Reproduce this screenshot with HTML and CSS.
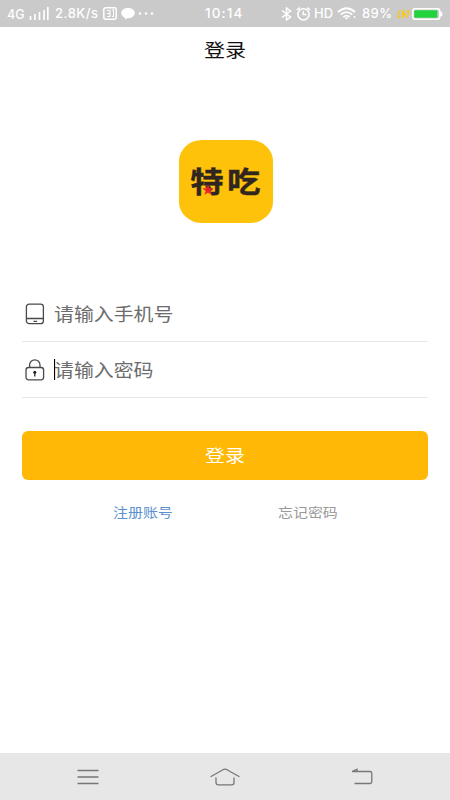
FILE: index.html
```html
<!DOCTYPE html>
<html lang="zh-CN">
<head>
<meta charset="utf-8">
<title>登录</title>
<link rel="stylesheet" href="styles.css">
</head>
<body>
<div class="screen">
  <header class="status">
    <div class="status-left">
      <span class="network">4G</span>
      <svg class="signal" width="20" height="13" viewBox="0 0 20 13"><path d="M1.500 9v4M6 7v6M10.500 5v8M15 3v10M18.800 0v13" stroke="#fff" stroke-width="1.700"/></svg>
      <span class="speed">2.8K/s</span>
      <svg class="app" width="14" height="13" viewBox="0 0 14 13" fill="none" stroke="#fff"><rect x=".8" y=".8" width="12.400" height="11.400" rx="2" stroke-width="1.500"/><path d="M4 3.500h3v6H4M4 6.500h3M9 3h1.500v6.500H9" stroke-width="1.100"/></svg>
      <svg class="bubble" width="14" height="13" viewBox="0 0 14 13" fill="#fff"><ellipse cx="7" cy="6" rx="6.800" ry="5.200"/><path d="M3.500 9.500l1 3L8 10z"/></svg>
      <svg class="dots" width="16" height="3" viewBox="0 0 16 3" fill="#fff"><circle cx="2" cy="1.500" r="1.200"/><circle cx="8" cy="1.500" r="1.200"/><circle cx="14" cy="1.500" r="1.200"/></svg>
    </div>
    <span class="clock">10:14</span>
    <div class="status-right">
      <svg class="bluetooth" width="11" height="14" viewBox="0 0 11 14" fill="none" stroke="#fff" stroke-width="1.500"><path d="M1 3.500l8.500 6.500-4 3V1l4 3L1 10.500"/></svg>
      <svg class="alarm" width="15" height="14" viewBox="0 0 15 14" fill="none" stroke="#fff" stroke-width="1.500"><circle cx="7.500" cy="7.300" r="5.600"/><path d="M7.300 4.300v3.200h3M.8 3L4 .7M14.200 3L11 .7"/></svg>
      <span class="hd">HD</span>
      <svg class="wifi" width="20" height="13" viewBox="0 0 20 13" fill="none" stroke="#fff" stroke-width="1.700"><path d="M1 5Q9.500-2.500 18 5M3.700 7.500Q9.500 2.700 15.300 7.500M6.300 10Q9.500 7.500 12.700 10"/><path d="M7.500 10.500h4l-2 2.300z" fill="#fff" stroke="none"/><circle cx="17.500" cy="10" r=".9" fill="#fff" stroke="none"/></svg>
      <span class="percent">89%</span>
      <svg class="bolt" width="13" height="12" viewBox="0 0 13 12"><path d="M8 .5L3.500 6.500h2.300L4.500 11.500l5.500-6H7.300z" fill="#f8c812"/><path d="M4 2Q.2 4 1.500 9.500l2-1M9.500 3.500l2-1q1 4.500-2.500 7" fill="none" stroke="#f8c812" stroke-width="1.200"/></svg>
      <svg class="battery" width="31" height="12" viewBox="0 0 31 12"><rect x=".8" y=".8" width="27" height="10.400" rx="2.500" fill="none" stroke="#fff" stroke-width="1.500"/><rect x="2.300" y="2.200" width="23" height="7.600" rx="1" fill="#20d33d"/><path d="M28 3.500q2.500 0 2.500 2.500T28 8.500z" fill="#fff"/></svg>
    </div>
  </header>

  <h1 class="title"><span class="wide-title">登录</span></h1>

  <main class="content">
    <div class="logo">
      <span class="logo-text">特吃</span>
      <svg class="star" width="12" height="12" viewBox="0 0 12 12"><path d="M6 .3l1.400 3.900 4.200.1-3.300 2.600 1.200 4L6 8.600l-3.500 2.300 1.200-4L.4 4.300l4.200-.1z" fill="#ed2228"/></svg>
    </div>

    <form class="form">
      <label class="field">
        <svg class="field-icon" width="20" height="22" viewBox="0 0 20 22" fill="none" stroke="#4a4a4a" stroke-width="1.300"><rect x="1.400" y="1.200" width="17" height="19.500" rx="2.800"/><path d="M1.400 15.500h17M8.500 18.300h3.500"/></svg>
        <span class="placeholder">请输入手机号</span>
      </label>
      <label class="field">
        <svg class="field-icon" width="20" height="22" viewBox="0 0 20 22" fill="none" stroke="#4a4a4a" stroke-width="1.300"><rect x="1" y="8.500" width="17.600" height="12.300" rx="2.500"/><path d="M4.600 8.500V6a5.200 5.200 0 0 1 10.400 0v2.500"/><circle cx="9.800" cy="13.300" r="1.500" fill="#222" stroke="none"/><path d="M9.800 13.500v4" stroke="#222"/></svg>
        <span class="placeholder focused">请输入密码</span>
      </label>
      <button class="submit" type="button"><span class="wide-label">登录</span></button>
    </form>

    <div class="links">
      <a class="link register">注册账号</a>
      <a class="link forgot">忘记密码</a>
    </div>
  </main>

  <nav class="nav">
    <svg width="22" height="16" viewBox="0 0 22 16" fill="none" stroke="#777" stroke-width="1.300"><path d="M.5 1.500h21M.5 8h21M.5 14.500h21"/></svg>
    <svg width="30" height="18" viewBox="0 0 30 18" fill="none" stroke="#777" stroke-width="1.300" stroke-linecap="round"><path d="M1 8.500L13 1.700q2-1 4 0L29 8.500M6 10v4.500q0 2.300 2.300 2.300h13.400q2.300 0 2.300-2.300V10"/></svg>
    <svg width="22" height="17" viewBox="0 0 22 17" fill="none" stroke="#777" stroke-width="1.300"><path d="M1 3.500h18q1.800 0 1.800 1.800v8.400q0 1.800-1.800 1.800H3.500M1 3.500L6 1.200v2.300"/></svg>
  </nav>
</div>
</body>
</html>
```
FILE: styles.css
```css
* {
  box-sizing: border-box;
}

body {
  margin: 0;
  background: #fff;
  font-family: "Noto Sans", "Noto Sans CJK SC", sans-serif;
}

.screen {
  display: flex;
  flex-direction: column;
  width: 450px;
  height: 800px;
  overflow: hidden;
}

.status {
  display: grid;
  grid-template-columns: 205px 76px 169px;
  align-items: center;
  height: 27px;
  flex: none;
  background: #cacaca;
  color: #fff;
  font: 500 13px/27px Inter, sans-serif;
  white-space: nowrap;
}

.status-left,
.status-right {
  display: flex;
  align-items: center;
  height: 27px;
}

.status svg,
.status span {
  flex: none;
}

.network {
  width: 22px;
  margin-left: 7px;
  font-size: 12.5px;
  padding-top: 2px;
}

.signal {
  margin-right: 6px;
}

.speed {
  width: 48px;
  letter-spacing: .5px;
}

.bubble {
  margin: 0 3px 0 4px;
}

.clock {
  font-size: 13.5px;
  letter-spacing: 1.15px;
}

.alarm {
  margin: 0 3px 0 4px;
}

.hd {
  width: 23px;
}

.percent {
  width: 35px;
  margin-left: 5px;
  letter-spacing: .4px;
}

.battery {
  margin-left: 2px;
}

.title {
  height: 46px;
  margin: 0;
  flex: none;
  text-align: center;
  font-size: 18px;
  font-weight: 400;
  line-height: 46px;
  color: #111;
}

.wide-title,
.wide-label {
  display: inline-block;
  transform: scaleX(1.17);
}

.content {
  flex: 1;
  padding: 67px 22px 0;
}

.logo {
  position: relative;
  display: flex;
  align-items: center;
  justify-content: center;
  width: 94px;
  height: 83px;
  margin: 0 auto 64px 157px;
  border-radius: 23px / 21px;
  background: #ffc20b;
}

.logo-text {
  margin-right: -3px;
  font-size: 29px;
  font-weight: 700;
  line-height: 40px;
  letter-spacing: 3px;
  color: #30251f;
  -webkit-text-stroke: .4px #30251f;
  transform: scaleX(1.15);
}

.star {
  position: absolute;
  left: 23px;
  top: 44px;
}

.field {
  display: flex;
  align-items: center;
  height: 55px;
  border-bottom: 1px solid #e8e8e8;
}

.field + .field {
  height: 56px;
}

.field-icon {
  margin: 0 9px 0 3px;
}

.placeholder {
  font-size: 18px;
  line-height: 24px;
  color: #6c6c6c;
  transform: scaleX(1.105);
  transform-origin: left;
}

.focused {
  position: relative;
}

.focused::before {
  content: "";
  position: absolute;
  left: 0;
  top: 1px;
  width: 1px;
  height: 21px;
  background: #000;
}

.submit {
  display: block;
  width: 100%;
  height: 49px;
  margin-top: 33px;
  padding: 0;
  border: 0;
  border-radius: 6px;
  background: #ffb805;
  color: #fff;
  font: 400 17px/47px "Noto Sans", "Noto Sans CJK SC", sans-serif;
}

.links {
  display: flex;
  gap: 105px;
  padding: 23px 0 0 90.5px;
}

.link {
  width: 60px;
  font-size: 13px;
  line-height: 19px;
  white-space: nowrap;
  transform: scaleX(1.15);
  transform-origin: left;
}

.register {
  color: #5b91cd;
}

.forgot {
  color: #999;
}

.nav {
  display: flex;
  align-items: center;
  justify-content: space-between;
  height: 47px;
  flex: none;
  padding: 0 77px;
  background: #e7e7e7;
}
```
